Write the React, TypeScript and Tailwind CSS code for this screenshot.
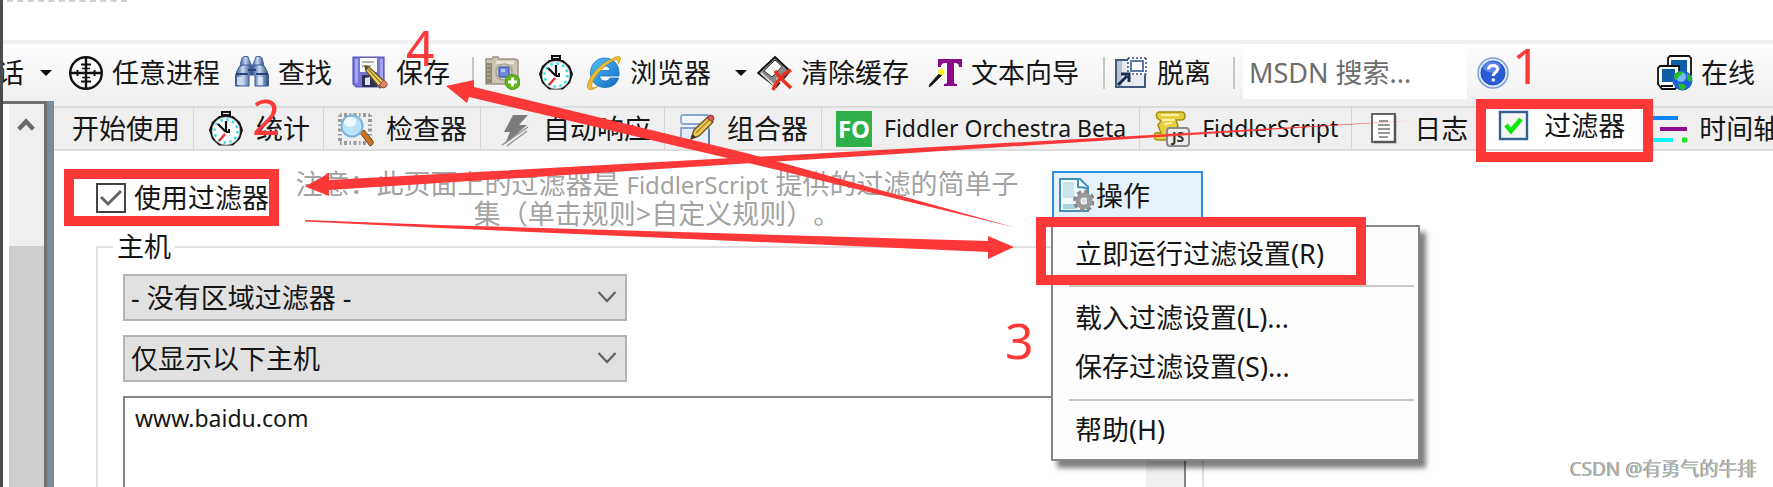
import { useState } from "react";
import type { ReactNode } from "react";

const ICON = "h-9 w-9 shrink-0";

function CrosshairIcon() {
  return (
    <svg viewBox="0 0 36 36" className={ICON} fill="none" stroke="#111">
      <circle cx="18" cy="18" r="15.8" fill="#fff" strokeWidth="2.4" />
      <path d="M18 2v32M2 18h32" strokeWidth="2.4" />
      <path d="M13 9.500h10M13 26.500h10M9.500 15v6M26.500 15v6" strokeWidth="2" />
      <path d="M14 13.500h8M14 22.500h8" strokeWidth="1.600" />
    </svg>
  );
}

function BinocularsIcon() {
  return (
    <svg viewBox="0 0 36 36" className={ICON}>
      <defs>
        <linearGradient id="bino" x1="0" x2="1" y1="0" y2="0">
          <stop offset="0" stopColor="#2f5090" />
          <stop offset=".45" stopColor="#c6d9f2" />
          <stop offset="1" stopColor="#27457f" />
        </linearGradient>
      </defs>
      <path d="M8 3l2-1.500h4l1 3 3 7v3H6v-3l1-5z" fill="url(#bino)" stroke="#4868a3" />
      <path d="M28 3l-2-1.500h-4l-1 3-3 7v3h12v-3l-1-5z" fill="url(#bino)" stroke="#4868a3" />
      <path d="M5 12l4-2h7l2 4v6h-3v11H1.500V20z" fill="url(#bino)" stroke="#3a5a99" />
      <path d="M31 12l-4-2h-7l-2 4v6h3v11h13.500V20z" fill="url(#bino)" stroke="#3a5a99" />
      <path d="M2 19h12M22 19h12M14 15h8" stroke="#24427c" strokeWidth="2" />
      <path d="M3 22h5v8H3zM24 22h5v8h-5z" fill="#dce9f8" opacity=".8" />
    </svg>
  );
}

function SaveIcon() {
  return (
    <svg viewBox="0 0 36 36" className={ICON}>
      <path d="M1 2h31v30H4l-3-3z" fill="#7775d6" stroke="#5553b4" strokeWidth="1.200" />
      <path d="M3 4h3v24H3zM28 4h3v24h-3z" fill="#a5a3f4" />
      <path d="M8 3h17v14H8z" fill="#fafafa" />
      <path d="M10 7h12M10 11h9" stroke="#9a9a9a" strokeWidth="1.500" />
      <path d="M10 20h15v12H10z" fill="#2c3350" />
      <path d="M13 23l5-1v8h-5z" fill="#dfe4ee" />
      <path d="M13 11l4 1 16 15-5 6-14-17z" fill="#ecd169" stroke="#6f5420" strokeWidth="1.300" />
      <path d="M16 14l14 15" stroke="#9d7a28" strokeWidth="1.300" />
      <path d="M13 11l4 1-3 4z" fill="#5a4a30" />
      <path d="M32 25l3 3q1 4-4 5l-4-3z" fill="#e08470" stroke="#9c4a38" />
    </svg>
  );
}

function CameraIcon() {
  return (
    <svg viewBox="0 0 36 36" className={ICON}>
      <path d="M2 4h6l1-2h5l1 2h15q4 0 4 3v20q0 2-2 2H2z" fill="#cdc5b3" stroke="#9a937f" strokeWidth="1.400" />
      <path d="M2 8h6v20H2z" fill="#8b8471" />
      <path d="M3 11h4M3 15h4M3 19h4M3 23h4" stroke="#b4ac98" strokeWidth="1.500" />
      <path d="M12 6h18v3H12z" fill="#e9e4d7" />
      <circle cx="20" cy="17" r="8" fill="#dcd8cd" stroke="#a39d8d" strokeWidth="1.500" />
      <rect x="15" y="12" width="10" height="10" rx="2" fill="#7089dc" stroke="#5064ae" strokeWidth="1.500" />
      <path d="M17 14h4v3h-4z" fill="#b7c8fa" />
      <circle cx="28.500" cy="27" r="7.500" fill="#62b51c" stroke="#4a9a10" />
      <path d="M28.500 22.500v9M24 27h9" stroke="#fff" strokeWidth="2.800" />
    </svg>
  );
}

function StopwatchIcon() {
  return (
    <svg viewBox="0 0 36 36" className={ICON}>
      <path d="M14 1h8v3h-8z" fill="#fff" stroke="#111" strokeWidth="2" />
      <path d="M11 5h14l7 6 3 8-3 9-7 6.500H11L4 28l-3-9 3-8z" fill="#111" />
      <circle cx="18" cy="20" r="14" fill="#fff" stroke="#888" strokeWidth=".6" />
      <circle cx="18" cy="20" r="11.500" fill="none" stroke="#2de3ea" strokeWidth="2.500" strokeDasharray="2.500 3.520" />
      <path d="M18 10v11M10 13l8 8" stroke="#111" strokeWidth="2.200" />
      <path d="M18 21h3v-3" fill="none" stroke="#111" strokeWidth="2" />
      <path d="M17 23l-6 7" stroke="#ee2a2a" strokeWidth="2.300" />
    </svg>
  );
}

function BrowserIcon() {
  return (
    <svg viewBox="0 0 36 36" className={ICON}>
      <defs>
        <linearGradient id="ie" x1="0" x2="1" y1="0" y2="1">
          <stop offset="0" stopColor="#56c4f7" />
          <stop offset="1" stopColor="#0f68c4" />
        </linearGradient>
      </defs>
      <path
        d="M18.500 3C27 3 33 9 33 17.500v3.500H13.500c.5 3 2.500 5 5.500 5 2.500 0 4-1 5-3h8.500C31 29 26 32.500 19 32.500 10.500 32.500 4.500 26.500 4.500 18S10.500 3 18.500 3zM13.500 15.500H24C23.500 12.500 21.500 11 18.800 11S14.300 12.500 13.500 15.500z"
        fill="url(#ie)"
        fillRule="evenodd"
        stroke="#1b74c4"
        strokeWidth=".8"
      />
      <path
        d="M25 4.500C30 1 34 .5 34.300 3c.3 2-1 4.500-2 6 .2-3-.5-5-3.500-4C19 8.500 6 23 5.500 31c0 2 2 2.500 6 .500C7 35 2 36 1.500 32 1 24 14 8 25 4.500z"
        fill="#ebbd35"
        stroke="#c18e15"
        strokeWidth=".7"
      />
    </svg>
  );
}

function ClearCacheIcon() {
  return (
    <svg viewBox="0 0 36 36" className={ICON}>
      <path d="M18 2l15 14-14 16L1 18z" fill="#8a8a8a" stroke="#111" strokeWidth="1.800" />
      <path d="M18 5l7 6.500L15 22l-8-6z" fill="#fff" stroke="#333" />
      <path d="M4 18l13 12" stroke="#ddd" strokeWidth="1.800" />
      <path d="M19 24l4-4 5 5-4 4z" fill="#ddd" />
      <path d="M18 16q6 8 16 17M34 15q-13 7-18 20" stroke="#e8301f" strokeWidth="3.600" fill="none" />
    </svg>
  );
}

function TextWizardIcon() {
  return (
    <svg viewBox="0 0 36 36" className={ICON}>
      <path
        d="M11 4h24v8h-3q0-4-4-4h-1v19q0 2 3 2v2H17v-2q3 0 3-2V8h-2q-4 0-4 4h-3z"
        fill="#8a0a8a"
      />
      <path d="M2 32l1-3L12 19l3 1-10 10z" fill="#111" stroke="#333" />
      <circle cx="14.500" cy="17" r="3" fill="#fff200" />
    </svg>
  );
}

function DetachIcon() {
  return (
    <svg viewBox="0 0 36 36" className={ICON}>
      <path d="M3 5h29v27H3z" fill="#e8eaf0" stroke="#41587f" strokeWidth="2" />
      <path d="M4 6h5v25H4z" fill="#b9c3d5" />
      <path d="M15 2h19v18H15z" fill="#fff" />
      <path d="M15 3h19M15 19h19" stroke="#41587f" strokeWidth="1.600" strokeDasharray="2 2" />
      <path d="M15 3v17M33 3v17" stroke="#41587f" strokeWidth="1.600" strokeDasharray="2 2" />
      <rect x="18" y="6" width="12" height="10" fill="#fff" stroke="#5c79ad" strokeWidth="2" />
      <path d="M5 30l9-9M8 19h8v8" stroke="#1c2e50" strokeWidth="3" fill="none" />
    </svg>
  );
}

function HelpIcon() {
  return (
    <svg viewBox="0 0 36 36" className={ICON} fill="none">
      <circle cx="18" cy="18" r="15" fill="#dce8fb" stroke="#7fa0d6" strokeWidth="1.500" />
      <circle cx="18" cy="18" r="12" fill="#2a5bd6" stroke="#2450b4" />
      <ellipse cx="17" cy="12" rx="9" ry="5.500" fill="#7ea2f5" opacity=".6" />
      <path d="M13.500 14.500q.3-4 4.500-4t4.500 3.700c0 3.300-4.200 3.300-4.200 6.800" stroke="#fff" strokeWidth="3" />
      <path d="M16.800 23.500h3v3h-3z" fill="#fff" />
    </svg>
  );
}

function OnlineIcon() {
  return (
    <svg viewBox="0 0 36 36" className={ICON}>
      <path d="M11 3l2-2h19l2 2v17l-4 3H11z" fill="#fff" stroke="#111" strokeWidth="1.800" />
      <path d="M14 5h16v13H14z" fill="#0c5ca8" />
      <path d="M1 13l2-2h19v18l-4 5H5l-4-5z" fill="#fff" stroke="#111" strokeWidth="1.800" />
      <path d="M5 14h13v13H5z" fill="#0c5ca8" />
      <path d="M4 31h12" stroke="#111" strokeWidth="2" />
      <circle cx="25.500" cy="25.500" r="10" fill="#1f5fd8" />
      <circle cx="24" cy="22" r="5" fill="#8fd0ff" opacity=".8" />
      <path d="M17 20q4-5 9-3 0 3-4 4-1 4-4 4zM30 18q5 3 5 8-4 1-5-2zM21 29q6-1 8 2-1 4-4 4-3-1-4-6z" fill="#27c02b" />
    </svg>
  );
}

function InspectorIcon() {
  return (
    <svg viewBox="0 0 36 36" className={ICON}>
      <path
        d="M2 4h30M2 32h30M2 4v28M32 4v28"
        fill="none"
        stroke="#777"
        strokeWidth="4"
        strokeDasharray="1.500 2.500 3 2.500"
        opacity=".7"
      />
      <path d="M22 22l4-3 9 11q1 4-3 5z" fill="#c8752a" stroke="#7f4412" />
      <circle cx="14" cy="15" r="10.500" fill="#b9e4fb" stroke="#7fb4da" strokeWidth="2" />
      <ellipse cx="12" cy="11" rx="6" ry="5" fill="#eefaff" />
    </svg>
  );
}

function BoltIcon() {
  return (
    <svg viewBox="0 0 36 36" className={ICON}>
      <path d="M18 4h15L24 14h8L10 33l5-12H9z" fill="#7c7c7c" />
      <path d="M33 16L7 34M32 20L12 35" stroke="#8f8f8f" strokeWidth="1.300" />
    </svg>
  );
}

function ComposerIcon() {
  return (
    <svg viewBox="0 0 36 36" className={ICON}>
      <rect x="2" y="4" width="28" height="9" rx="2" fill="#f3f7fd" stroke="#87a5d4" strokeWidth="1.800" />
      <path d="M2 17h28v18H5l-3-3z" fill="#e5edf8" stroke="#87a5d4" strokeWidth="1.800" />
      <path d="M30 18v17H8" stroke="#5b7eb5" strokeWidth="2" fill="none" />
      <path d="M12 28l3-9L29 6l5 5-14 14z" fill="#f0cc58" stroke="#6b5222" strokeWidth="1.400" />
      <path d="M17 22L30 9" stroke="#a8842c" strokeWidth="1.500" />
      <path d="M28 7l3-3q4 0 4 4l-2 3z" fill="#d65454" stroke="#8c2c2c" />
      <path d="M12 28l1.500-5 3.500 3z" fill="#333" />
    </svg>
  );
}

function OrchestraIcon() {
  return (
    <span className="flex h-9 w-9 shrink-0 items-center justify-center bg-[#2fb04b] text-2xl leading-none font-bold text-white">
      FO
    </span>
  );
}

function ScriptIcon() {
  return (
    <span className="relative h-9 w-9 shrink-0">
      <svg viewBox="0 0 36 36" className="h-9 w-9">
        <path
          d="M5 1h22q4 0 4 4t-4 4h-5l2 6-6 5 4 9H4q-4 0-4-4t4-3h3l-3-8 3-4-4-3q-2-5 2-6z"
          fill="#e6cf3e"
          stroke="#a58f14"
          strokeWidth="1.500"
        />
        <path d="M7 4h18M8 9h13M10 13l8-1" stroke="#fbf2a8" strokeWidth="2" />
      </svg>
      <span className="absolute right-0 bottom-0 flex h-5 w-6 items-center justify-center rounded-sm border-2 border-[#8a8a8a] bg-[#eee] text-sm leading-none font-bold text-[#333]">
        JS
      </span>
    </span>
  );
}

function LogIcon() {
  return (
    <svg viewBox="0 0 36 36" className={ICON}>
      <path d="M6 3h23v28H6z" fill="#fff" stroke="#666" strokeWidth="2" />
      <path d="M29 4v27H8" stroke="#555" strokeWidth="2.500" fill="none" />
      <path d="M13 10h9M12 14h12M12 18h12M12 22h12M13 26h9" stroke="#777" strokeWidth="1.600" />
    </svg>
  );
}

function FilterIcon() {
  return (
    <svg viewBox="0 0 36 36" className={ICON}>
      <rect x="4" y="4" width="27" height="27" fill="#f6f6f4" stroke="#31618f" strokeWidth="2.400" />
      <path d="M10 17l5 6L25 11" fill="none" stroke="#0be80b" strokeWidth="4.500" />
    </svg>
  );
}

function TimelineIcon() {
  return (
    <svg viewBox="0 0 36 36" className={ICON}>
      <path d="M0 7h27" stroke="#0a84ff" strokeWidth="4" />
      <path d="M9 18h27" stroke="#8a0c94" strokeWidth="4" />
      <path d="M0 29h22" stroke="#12f2fa" strokeWidth="4" />
      <path d="M31 29h5" stroke="#22e822" strokeWidth="5" />
    </svg>
  );
}

function ActionIcon() {
  return (
    <svg viewBox="0 0 36 36" className={ICON}>
      <path d="M2 2h20l8 8v24H2z" fill="#f2fafd" stroke="#3f90ba" strokeWidth="2" />
      <path d="M5 5h11v16H5z" fill="#c8e4ee" />
      <path d="M5 27h12v5H5z" fill="#a7d3e2" />
      <path d="M20 2v8q6 0 10 2" fill="#fff" stroke="#3f90ba" strokeWidth="2" />
      <circle cx="26" cy="24" r="9" fill="none" stroke="#858585" strokeWidth="4" strokeDasharray="4 3.070" />
      <circle cx="26" cy="24" r="6" fill="none" stroke="#9a9a9a" strokeWidth="5" />
      <circle cx="26" cy="24" r="2.500" fill="#ddd" />
    </svg>
  );
}

function Caret({ className }: { className: string }) {
  return (
    <svg viewBox="0 0 16 16" className={`h-4 w-4 shrink-0 ${className}`}>
      <path d="M2 5h12l-6 6z" fill="#111" />
    </svg>
  );
}

function Separator({ className }: { className: string }) {
  return <span className={`h-8 w-0.5 shrink-0 bg-[#c6c6c6] ${className}`} />;
}

function ToolButton({
  icon,
  label,
  title,
  className = "",
}: {
  icon?: ReactNode;
  label?: string;
  title?: string;
  className?: string;
}) {
  return (
    <button aria-label={title} className={`flex shrink-0 items-center gap-2 whitespace-nowrap ${className}`}>
      {icon}
      {label && <span>{label}</span>}
    </button>
  );
}

function Toolbar() {
  return (
    <div className="flex h-[57px] shrink-0 items-center overflow-hidden bg-linear-to-b from-[#fdfdfd] to-[#f1f1f1] pr-[18px]">
      <ToolButton label="话" className="-ml-1.5" />
      <Caret className="ml-3.5" />
      <ToolButton icon={<CrosshairIcon />} label="任意进程" className="ml-3.5" />
      <ToolButton icon={<BinocularsIcon />} label="查找" className="ml-3.5" />
      <ToolButton icon={<SaveIcon />} label="保存" className="ml-5" />
      <Separator className="ml-[22px]" />
      <ToolButton icon={<CameraIcon />} title="截图" className="ml-2.5" />
      <ToolButton icon={<StopwatchIcon />} title="计时器" className="ml-[18px]" />
      <ToolButton icon={<BrowserIcon />} label="浏览器" className="ml-3" />
      <Caret className="ml-[22px]" />
      <ToolButton icon={<ClearCacheIcon />} label="清除缓存" className="ml-2" />
      <ToolButton icon={<TextWizardIcon />} label="文本向导" className="ml-[18px]" />
      <Separator className="ml-6" />
      <ToolButton icon={<DetachIcon />} label="脱离" className="ml-2" />
      <Separator className="ml-[22px]" />
      <input
        aria-label="MSDN 搜索"
        placeholder="MSDN 搜索..."
        className="ml-2 h-[52px] w-56 shrink-0 bg-white px-1.5 placeholder:text-[#6d6d6d]"
      />
      <ToolButton icon={<HelpIcon />} title="帮助" className="ml-2" />
      <ToolButton icon={<OnlineIcon />} label="在线" className="ml-auto" />
    </div>
  );
}

const tabs = [
  { id: "stats", label: "统计", icon: <StopwatchIcon /> },
  { id: "inspectors", label: "检查器", icon: <InspectorIcon /> },
  { id: "responder", label: "自动响应", icon: <BoltIcon /> },
  { id: "composer", label: "组合器", icon: <ComposerIcon /> },
  { id: "orchestra", label: "Fiddler Orchestra Beta", icon: <OrchestraIcon /> },
  { id: "script", label: "FiddlerScript", icon: <ScriptIcon /> },
  { id: "log", label: "日志", icon: <LogIcon /> },
];

function TabStrip() {
  const tabClass =
    "flex shrink-0 items-center gap-3 border-r border-[#d4d4d4] pr-[13px] pl-3.5 whitespace-nowrap";
  return (
    <div className="flex h-[45px] shrink-0 border-y-2 border-[#dcdcdc] bg-[#efefef] pl-1">
      <button className={tabClass}>开始使用</button>
      {tabs.map((tab) => (
        <button key={tab.id} className={tabClass}>
          {tab.icon}
          <span className={/^F/.test(tab.label) ? "text-[23px]" : ""}>{tab.label}</span>
        </button>
      ))}
      <button className="relative -ml-1.5 flex shrink-0 items-center gap-3 bg-white pr-7 pb-1.5 pl-5 whitespace-nowrap">
        <FilterIcon />
        过滤器
        <span className="absolute inset-x-0 -top-[9px] -bottom-[13px] z-10 border-10 border-[#fc3838]" />
      </button>
      <button className="-ml-0.5 flex shrink-0 items-center gap-3 whitespace-nowrap">
        <TimelineIcon />
        时间轴
      </button>
    </div>
  );
}

function SessionScrollbar() {
  return (
    <div className="flex w-[51px] shrink-0 border-r-[7px] border-[#788a9b] bg-white">
      <div className="flex flex-1 border-t-3 border-r-3 border-[#707070] pl-1.5">
        <div className="flex flex-1 flex-col bg-[#efefef]">
          <svg viewBox="0 0 36 146" className="w-full shrink-0">
            <path d="M10 26l7.500-8 7.500 8" fill="none" stroke="#6a6a6a" strokeWidth="4.500" />
          </svg>
          <div className="flex-1 bg-[#cdcdcd]" />
        </div>
      </div>
    </div>
  );
}

function ActionMenu() {
  const item = "flex w-full items-center pl-[22px] text-left whitespace-nowrap";
  return (
    <div className="relative ml-[25px] w-[151px] shrink-0 pt-0.5">
      <button className="flex h-[58px] w-full items-center gap-0.5 border-2 border-[#2f8de0] bg-[#e5f1fb] pb-2.5 pl-1">
        <ActionIcon />
        操作
      </button>
      <div className="absolute top-14 -left-px z-20 w-[369px] border-2 border-[#858585] bg-[#fdfdfd] pr-1 pb-0.5 shadow-[6px_7px_5px_rgba(0,0,0,0.5)]">
        <button className={`${item} relative h-[58px] pb-1.5`}>
          立即运行过滤设置(R)
          <span className="absolute -top-2.5 -left-[17px] h-17 w-[330px] border-10 border-[#fc3838]" />
        </button>
        <hr className="ml-4 border-t-2 border-[#c9c9c9]" />
        <button className={`${item} mt-1.5 h-12`}>载入过滤设置(L)...</button>
        <button className={`${item} h-[50px]`}>保存过滤设置(S)...</button>
        <hr className="mt-2 ml-4 border-t-2 border-[#c9c9c9]" />
        <button className={`${item} h-14`}>帮助(H)</button>
      </div>
    </div>
  );
}

function HostSelect({ label, options }: { label: string; options: string[] }) {
  return (
    <div className="relative w-[504px] max-w-full shrink-0">
      <select
        aria-label={label}
        className="block h-[47px] w-full appearance-none border-2 border-[#b4b4b4] bg-[#e1e1e1] pl-1.5"
      >
        {options.map((option) => (
          <option key={option}>{option}</option>
        ))}
      </select>
      <svg
        viewBox="0 0 20 14"
        className="pointer-events-none absolute top-4 right-2.5 h-3.5 w-5"
        fill="none"
        stroke="#666"
        strokeWidth="2.400"
      >
        <path d="M1.500 2L10 11 18.500 2" />
      </svg>
    </div>
  );
}

function FiltersPanel() {
  const [enabled, setEnabled] = useState(true);
  const [hosts, setHosts] = useState("www.baidu.com");

  return (
    <div className="flex min-h-0 flex-1 flex-col bg-white">
      <div className="flex h-[82px] shrink-0 items-start pt-[18px] pl-2.5">
        <label className="flex h-[57px] w-[215px] shrink-0 items-center border-10 border-[#fc3838] pl-[22px] whitespace-nowrap">
          <span className="relative mr-2 h-[30px] w-[30px] shrink-0">
            <input
              type="checkbox"
              checked={enabled}
              onChange={(e) => setEnabled(e.target.checked)}
              className="block h-full w-full appearance-none border-2 border-[#444] bg-white"
            />
            {enabled && (
              <svg viewBox="0 0 30 30" className="pointer-events-none absolute inset-0" fill="none">
                <path d="M5 14l7 7L25 8" stroke="#666" strokeWidth="3" />
              </svg>
            )}
          </span>
          使用过滤器
        </label>
        <p className="ml-2 w-[740px] shrink-0 text-center leading-[30px] whitespace-nowrap text-[#a3a3a3] [text-spacing-trim:space-all]">
          注意：此页面上的过滤器是 <span className="text-2xl leading-none">FiddlerScript</span> 提供的过滤的简单子
          <br />集（单击规则&gt;自定义规则）。
        </p>
        <ActionMenu />
      </div>
      <fieldset className="ml-[42px] flex min-h-0 max-w-[1108px] flex-1 flex-col border-2 border-b-0 border-[#e0e0e0] pr-4 pl-[25px]">
        <legend className="-ml-2.5 px-1 leading-[27px]">主机</legend>
        <div className="flex min-h-0 flex-1 flex-col gap-3.5 pt-3.5">
          <HostSelect label="区域过滤" options={["- 没有区域过滤器 -", "仅显示内网主机", "仅显示外网主机"]} />
          <HostSelect label="主机过滤" options={["仅显示以下主机", "隐藏以下主机", "- 没有主机过滤器 -"]} />
          <div className="flex min-h-0 flex-1 border-2 border-b-0 border-[#858585]">
            <textarea
              aria-label="主机列表"
              rows={1}
              value={hosts}
              onChange={(e) => setHosts(e.target.value)}
              className="flex-1 resize-none px-2.5 pt-1 text-[23px] leading-8"
            />
            <div className="w-[38px] bg-[#efefef]" />
          </div>
        </div>
      </fieldset>
    </div>
  );
}

// Numbered steps and arrows drawn over the window
function Annotations() {
  return (
    <div className="pointer-events-none absolute inset-0 z-30 text-[50px] leading-none text-[#fc3838]">
      <svg width="1773" height="487" viewBox="0 0 1773 487" fill="#fc3838">
        <path d="M1413 120.500L880 150 329 180V173L305 186.500 329 196V190L880 155z" />
        <path d="M305 220L440 225 988 241V236L1014 247 988 259V252L440 228 305 221.500z" />
        <path d="M1015 227.500L750 154 474 87V80L446 86 467 103 469 97 740 161z" />
      </svg>
      <span className="absolute top-10 left-[1512px]">1</span>
      <span className="absolute top-[91px] left-[252px]">2</span>
      <span className="absolute top-[315px] left-[1005px]">3</span>
      <span className="absolute top-[22px] left-[406px]">4</span>
    </div>
  );
}

function App() {
  return (
    <div className="relative flex h-screen w-full overflow-hidden bg-white font-['Noto_Sans','Noto_Sans_CJK_SC',sans-serif] text-[27px] leading-none text-[#161616]">
      <div className="w-[3px] shrink-0 bg-[#4b4b4b]" />
      <div className="flex min-w-0 flex-1 flex-col">
        <div className="h-11 shrink-0 border-b-4 border-[#f0f0f0]">
          <div className="ml-1 w-30 border-t-2 border-dashed border-[#d0d0d0]" />
        </div>
        <Toolbar />
        <div className="flex min-h-0 flex-1">
          <SessionScrollbar />
          <div className="flex min-w-0 flex-1 flex-col bg-[#f0f0f0] pt-[5px]">
            <TabStrip />
            <FiltersPanel />
          </div>
        </div>
      </div>
      <Annotations />
      <p className="absolute right-4 bottom-2 z-30 text-[19px] text-[#b3bab3] [text-shadow:-1px_0_0_#8f8f8f]">
        CSDN @有勇气的牛排
      </p>
    </div>
  );
}

export default App;
